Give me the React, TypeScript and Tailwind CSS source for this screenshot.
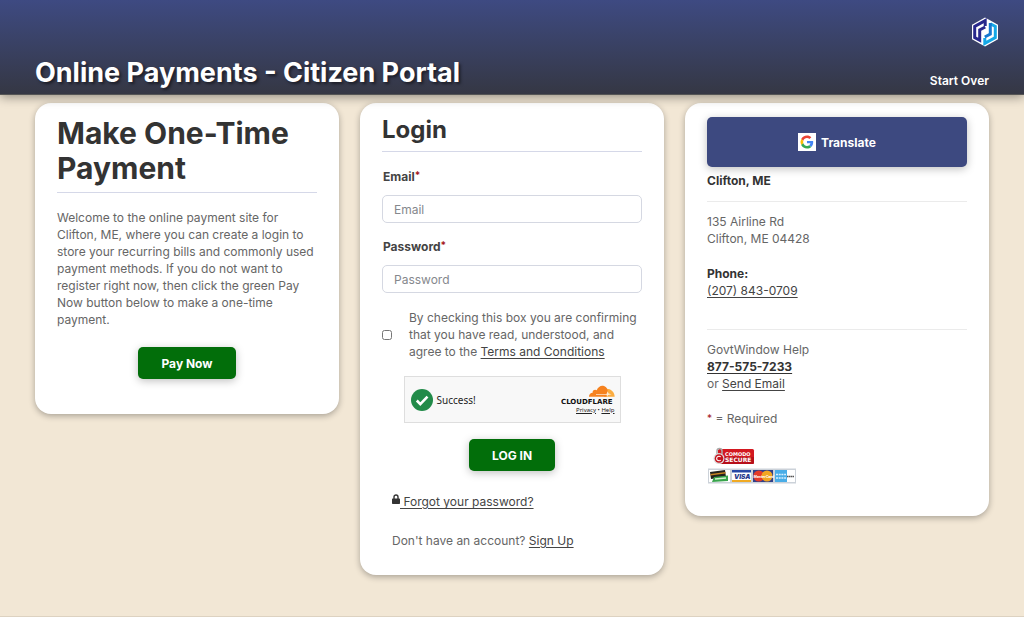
import React from 'react';

const linkClass = 'text-[#444444] underline underline-offset-2';

function Card({ children, className = '' }: { children: React.ReactNode; className?: string }) {
  return (
    <section className={`rounded-2xl bg-white px-[22px] shadow-[0_2px_6px_rgba(0,0,0,0.3)] ${className}`}>
      {children}
    </section>
  );
}

function Required() {
  return <span className="align-top text-[10px] leading-4 text-[#a4161a]">*</span>;
}

function Field({ id, label, type }: { id: string; label: string; type: string }) {
  return (
    <div>
      <label htmlFor={id} className="block pl-px font-bold leading-5 text-[#444444]">
        {label}
        <Required />
      </label>
      <input
        id={id}
        type={type}
        placeholder={label}
        className="mt-2 block h-7 w-full rounded-[5px] border border-[#d5d8e2] bg-white px-[11px] placeholder:text-[#85888d]"
      />
    </div>
  );
}

function GovLogo() {
  return (
    <svg viewBox="0 0 28 30" className="h-[30px] w-7" aria-hidden="true">
      <path d="M14 .5 27 7.8v14.4L14 29.5 1 22.2V7.8z" fill="#fff" />
      <g fill="none" strokeWidth="3">
        <path d="M14.2 9V3.6L3.7 9.5v11l5 2.8V13l5.500-3" stroke="#28288c" />
        <path d="M13.8 21v5.400l10.500-5.900v-11l-5-2.800" stroke="#14a8e6" />
        <path d="M19.3 6v11l-5.500 3" stroke="#1678cf" />
      </g>
    </svg>
  );
}

function GoogleIcon() {
  return (
    <svg viewBox="0 0 18 18" className="size-[18px]" aria-hidden="true">
      <path d="M0 0h18v18H0z" fill="#fff" />
      <g transform="translate(2.5 2.5) scale(.27)">
        <path d="M24 9.5c3.5 0 6.7 1.2 9.2 3.6l6.9-6.9C35.9 2.4 30.5 0 24 0 14.6 0 6.5 5.4 2.6 13.2l8 6.2C12.4 13.7 17.7 9.5 24 9.5z" fill="#ea4335" />
        <path d="M47 24.6c0-1.6-.2-3.1-.4-4.6H24v9h12.9c-.6 3-2.3 5.5-4.8 7.2l7.7 6C44.4 38 47 31.8 47 24.6z" fill="#4285f4" />
        <path d="M10.5 28.6a14 14 0 0 1 0-9.2l-8-6.2a24 24 0 0 0 0 21.6z" fill="#fbbc05" />
        <path d="M24 48c6.5 0 11.9-2.1 15.9-5.8l-7.8-6c-2.1 1.4-4.9 2.3-8.1 2.3-6.3 0-11.6-4.2-13.5-9.9l-8 6.2C6.5 42.6 14.6 48 24 48z" fill="#34a853" />
      </g>
    </svg>
  );
}

function CloudflareWidget() {
  return (
    <div className="mx-auto mt-4 flex h-[47px] w-[217px] items-center border border-[#dedede] bg-[#f8f8f8] pr-[5px] pl-[6px] font-['Noto_Sans',sans-serif] text-[#232323]">
      <svg viewBox="0 0 22 22" className="size-[22px]" aria-hidden="true">
        <circle cx="11" cy="11" r="11" fill="#228b49" />
        <path d="m5.8 11.5 3.5 3.6 7.2-7.5" fill="none" stroke="#fff" strokeWidth="2.6" />
      </svg>
      <span className="ml-1 text-[10px] leading-4">Success!</span>
      <div className="ml-auto flex flex-col items-end">
        <svg viewBox="0 0 54 20" className="h-5 w-[54px]" role="img" aria-label="Cloudflare">
          <path d="M44.5 3.9c4.6-.6 9 2.8 9.2 7.8H43z" fill="#fbad41" />
          <path d="M28 11.7c-.1-2.4 1.4-3.8 3.6-4-.4-2.2 2.4-3.8 4.1-2.4C37.2 1.7 40.3 0 43 1.1c2.8 1 4 3.8 3.7 6.4l-1.1 4.2z" fill="#f6821f" />
          <path d="M35 9.3h10.4l1.3-3.1.8 2.4 3.2.7-3.7.7-1 1.7-.3-1.7H35z" fill="#fff" opacity=".8" />
          <text x="0" y="18.5" fontFamily="DejaVu Sans, sans-serif" fontWeight="700" fontSize="7" fill="#111">CLOUDFLARE</text>
        </svg>
        <p className="text-[6px] leading-[10px]">
          <a href="#privacy" className="underline">Privacy</a> • <a href="#help" className="underline">Help</a>
        </p>
      </div>
    </div>
  );
}

function ComodoBadge() {
  return (
    <svg viewBox="0 0 42 18" className="ml-[6px] h-[18px] w-[42px]" role="img" aria-label="Comodo Secure">
      <rect x="5" y="2" width="36" height="15" rx="1.5" fill="#d31820" />
      <path d="M5 10h36v5.5a1.5 1.5 0 0 1-1.5 1.5h-33A1.5 1.5 0 0 1 5 15.5z" fill="#b70f19" />
      <path d="M4 7V4a2.5 2.5 0 0 1 5 0v3" fill="none" stroke="#aaa" strokeWidth="1.5" />
      <circle cx="6" cy="11.5" r="5.5" fill="#ddd" />
      <circle cx="6" cy="11.5" r="4.3" fill="#c4131c" />
      <path d="M7.7 10a2.3 2.3 0 1 0 0 3" fill="none" stroke="#fff" strokeWidth="1.1" />
      <text x="12" y="8.5" fontFamily="DejaVu Sans, sans-serif" fontWeight="700" fontSize="5" fill="#fff">COMODO</text>
      <text x="12" y="15" fontFamily="DejaVu Sans, sans-serif" fontWeight="700" fontSize="6" fill="#fff">SECURE</text>
    </svg>
  );
}

function PaymentCards() {
  return (
    <svg viewBox="0 0 90 16" className="mt-[3px] h-4 w-[90px]" role="img" aria-label="E-check, Visa, MasterCard and American Express">
      <path d="M1 .5h88v15H1z" fill="#ccd2d9" />
      <path d="M2 2h21v12H2zM25 2h19v12H25z" fill="#fff" />
      <path d="m3 4 15-2 1 7-15 2z" fill="#24221f" />
      <path d="m3.5 6 15-2v1.5l-15 2z" fill="#c88322" />
      <path d="m7 9 14-1.5V13L5 14z" fill="#38a44b" />
      <path d="m8 11 11-1" stroke="#d6f2d0" strokeWidth="1.5" />
      <path d="M25 2h19v2.5H25z" fill="#2647a5" />
      <path d="M25 12h19v2H25z" fill="#f0aa24" />
      <text x="27" y="11" fontFamily="Inter, sans-serif" fontStyle="italic" fontWeight="900" fontSize="6.5" fill="#26388d">VISA</text>
      <path d="M46 2h20v12H46z" fill="#30408a" />
      <circle cx="51.8" cy="8" r="5.5" fill="#e43a2a" />
      <circle cx="60" cy="8" r="5.5" fill="#f2a623" />
      <text x="46.5" y="9.5" fontFamily="Inter, sans-serif" fontStyle="italic" fontWeight="700" fontSize="3.5" fill="#fff">MasterCard</text>
      <path d="M68 2h20v12H68z" fill="#fff" />
      <path d="M68 2h12v12H68z" fill="#49ade7" />
      <path d="M69 6.5h10M69 10h10" stroke="#d6efff" strokeWidth="1.5" strokeDasharray="2 .7" />
      <path d="M80 8.5h7" stroke="#555" strokeWidth="1.5" strokeDasharray="1.5 .4" />
    </svg>
  );
}

const buttonClass =
  'mx-auto block h-8 rounded-[5px] bg-[#026e0a] text-[12px] font-bold text-white shadow-[0_2px_8px_rgba(0,0,0,0.25)]';

export default function App() {
  return (
    <div className="min-h-screen border-b border-[#ddd2c1] bg-[#f2e7d5] font-[Inter,sans-serif] text-[12px] leading-[17px] text-[#666666]">
      <header className="relative flex h-[95px] items-end justify-between border-b border-[#555555] bg-linear-to-b from-[#3e4a82] to-[#353744] px-[35px] text-white shadow-[0_2px_10px_rgba(0,0,0,0.4)]">
        <h1 className="pb-[3px] text-[27px] leading-9 font-bold [text-shadow:2px_2px_3px_rgba(0,0,0,0.5)]">
          Online Payments - Citizen Portal
        </h1>
        <div className="-mr-[10px] flex flex-col items-end">
          <GovLogo />
          <a href="#start" className="mt-[25px] mr-[10px] mb-1 leading-[18px] font-semibold">Start Over</a>
        </div>
      </header>

      <main className="grid grid-cols-3 items-start gap-[21px] px-[35px] pt-2 pb-10">
        <Card className="pt-[13px] pb-[35px]">
          <h2 className="border-b border-[#d5d8e8] pb-[6px] text-[30px] leading-[35px] font-bold text-[#333333]">
            Make One-Time Payment
          </h2>
          <p className="mt-4 mb-[19px]">
            Welcome to the online payment site for Clifton, ME, where you can create a login to store your recurring
            bills and commonly used payment methods. If you do not want to register right now, then click the green Pay
            Now button below to make a one-time payment.
          </p>
          <button type="button" className={`${buttonClass} w-[98px]`}>Pay Now</button>
        </Card>

        <Card className="pt-[11px] pb-[26px]">
          <form>
            <h2 className="border-b border-[#d5d8e8] pb-[5px] text-[24px] leading-8 font-bold text-[#333333]">Login</h2>
            <div className="mt-[15px] flex flex-col gap-[14px]">
              <Field id="email" label="Email" type="email" />
              <Field id="password" label="Password" type="password" />
            </div>
            <div className="mt-4 flex items-center gap-[17px]">
              <input id="terms" type="checkbox" className="size-[10px] shrink-0" />
              <label htmlFor="terms">
                By checking this box you are confirming that you have read, understood, and agree to the{' '}
                <a href="#terms" className={linkClass}>Terms and Conditions</a>
              </label>
            </div>
            <CloudflareWidget />
            <button type="submit" className={`${buttonClass} mt-4 w-[86px]`}>LOG IN</button>
            <p className="mt-[22px] ml-[10px] flex">
              <svg viewBox="0 0 8 10" className="mt-px h-[10px] w-2" aria-hidden="true">
                <path d="M2 5V3a2 2 0 0 1 4 0v2" fill="none" stroke="#333" strokeWidth="1.4" />
                <rect y="4.5" width="8" height="5.5" rx=".7" fill="#333" />
              </svg>
              <a href="#forgot" className={`${linkClass} whitespace-pre`}> Forgot your password?</a>
            </p>
            <p className="mt-[22px] ml-[10px]">
              Don't have an account? <a href="#signup" className={linkClass}>Sign Up</a>
            </p>
          </form>
        </Card>

        <Card className="pt-[14px] pb-8">
          <button
            type="button"
            className="flex h-[50px] w-full items-center justify-center gap-[5px] rounded-[5px] bg-[#3d4980] font-bold text-white shadow-[0_2px_8px_rgba(0,0,0,0.25)]"
          >
            <GoogleIcon />
            Translate
          </button>
          <h2 className="border-b border-[#ebebeb] pt-[5px] pb-3 leading-[17px] font-bold text-[#333333]">Clifton, ME</h2>
          <address className="pt-[11px] not-italic">
            135 Airline Rd
            <br />
            Clifton, ME 04428
          </address>
          <p className="border-b border-[#ebebeb] pt-[18px] pb-[30px]">
            <strong className="text-[#333333]">Phone:</strong>
            <br />
            <a href="tel:2078430709" className={linkClass}>(207) 843-0709</a>
          </p>
          <p className="pt-[11px]">
            GovtWindow Help
            <br />
            <a href="tel:8775757233" className="font-bold text-[#333333] underline underline-offset-2">877-575-7233</a>
            <br />
            or <a href="#email" className={linkClass}>Send Email</a>
          </p>
          <p className="mt-[18px] mb-5">
            <Required /> = Required
          </p>
          <ComodoBadge />
          <PaymentCards />
        </Card>
      </main>
    </div>
  );
}
